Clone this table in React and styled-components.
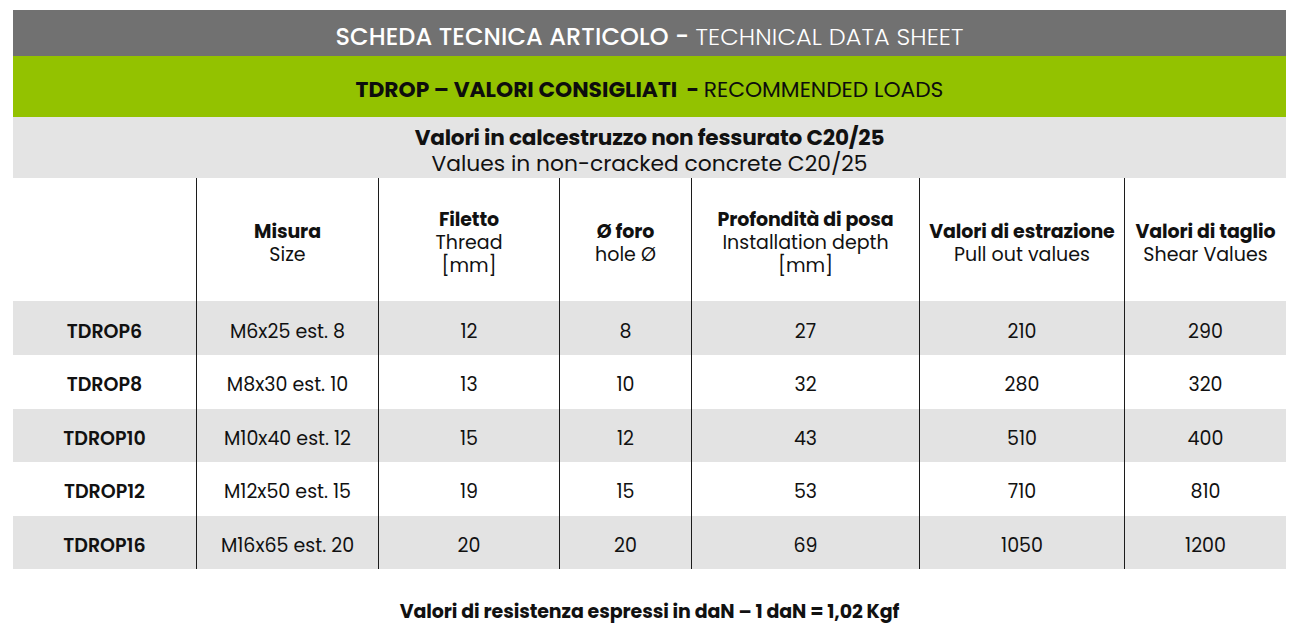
import React from "react";
import styled, { createGlobalStyle } from "styled-components";

const Global = createGlobalStyle`
  html, body { margin: 0; padding: 0; background: #ffffff; }
  body { font-family: Poppins, "Open Sans", "Noto Sans", sans-serif; color: #111; }
`;

const Sheet = styled.div`
  width: 1273px;
  margin: 10px 0 0 13px;
  display: flex;
  flex-direction: column;
`;

const TitleBar = styled.div`
  height: 46px;
  box-sizing: border-box;
  padding-top: 6px;
  background: #717171;
  color: #ffffff;
  display: flex;
  align-items: center;
  justify-content: center;
  font-size: 24px;
  letter-spacing: 0.1px;
`;

const GreenBar = styled.div`
  height: 61px;
  box-sizing: border-box;
  padding-top: 6px;
  background: #93c200;
  color: #0d0d0d;
  display: flex;
  align-items: center;
  justify-content: center;
  font-size: 21.8px;
`;

const Strong = styled.span`
  font-weight: ${(p) => p.$weight || 700};
  white-space: pre;
`;

const Light = styled.span`
  font-weight: ${(p) => p.$weight || 400};
  white-space: pre;
`;

const ConditionBar = styled.div`
  height: 61px;
  box-sizing: border-box;
  padding-top: 6px;
  background: #e4e4e4;
  display: flex;
  flex-direction: column;
  align-items: center;
  justify-content: center;
  line-height: 26px;
`;

const ConditionMain = styled.div`
  font-size: 21.6px;
  font-weight: 700;
  letter-spacing: -0.2px;
`;

const ConditionSub = styled.div`
  font-size: 21.8px;
  font-weight: 400;
`;

const Row = styled.div`
  display: grid;
  grid-template-columns: 183px 182px 181px 132px 228px 205px 162px;
  height: ${(p) => p.$height}px;
  background: ${(p) => (p.$shaded ? "#e3e3e3" : "#ffffff")};
`;

const Cell = styled.div`
  display: flex;
  flex-direction: column;
  align-items: center;
  justify-content: center;
  text-align: center;
  box-sizing: border-box;
  padding-top: 6px;
  border-left: ${(p) => (p.$first ? "none" : "1px solid #1c1c1c")};
  font-size: 19px;
  line-height: 23px;
  font-weight: ${(p) => (p.$bold ? 600 : 400)};
  color: #111;
`;

const HeadMain = styled.div`
  font-weight: 700;
  letter-spacing: -0.1px;
`;

const HeadSub = styled.div`
  font-weight: 400;
`;

const Footer = styled.div`
  margin-top: 28px;
  text-align: center;
  font-size: 19px;
  font-weight: 700;
  letter-spacing: -0.1px;
`;

const headers = [
  null,
  ["Misura", "Size"],
  ["Filetto", "Thread", "[mm]"],
  ["Ø foro", "hole Ø"],
  ["Profondità di posa", "Installation depth", "[mm]"],
  ["Valori di estrazione", "Pull out values"],
  ["Valori di taglio", "Shear Values"],
];

const data = [
  ["TDROP6", "M6x25 est. 8", "12", "8", "27", "210", "290"],
  ["TDROP8", "M8x30 est. 10", "13", "10", "32", "280", "320"],
  ["TDROP10", "M10x40 est. 12", "15", "12", "43", "510", "400"],
  ["TDROP12", "M12x50 est. 15", "19", "15", "53", "710", "810"],
  ["TDROP16", "M16x65 est. 20", "20", "20", "69", "1050", "1200"],
];

export default function App() {
  return (
    <>
      <Global />
      <Sheet>
        <TitleBar>
          <Strong $weight={500}>SCHEDA TECNICA ARTICOLO - </Strong>
          <Light $weight={300}>TECHNICAL DATA SHEET</Light>
        </TitleBar>
        <GreenBar>
          <Strong>TDROP – VALORI CONSIGLIATI  - </Strong>
          <Light>RECOMMENDED LOADS</Light>
        </GreenBar>
        <ConditionBar>
          <ConditionMain>Valori in calcestruzzo non fessurato C20/25</ConditionMain>
          <ConditionSub>Values in non-cracked concrete C20/25</ConditionSub>
        </ConditionBar>
        <Row $height={123}>
          {headers.map((h, i) => (
            <Cell key={i} $first={i === 0}>
              {h && (
                <>
                  <HeadMain>{h[0]}</HeadMain>
                  {h.slice(1).map((s) => (
                    <HeadSub key={s}>{s}</HeadSub>
                  ))}
                </>
              )}
            </Cell>
          ))}
        </Row>
        {data.map((r, ri) => (
          <Row key={r[0]} $height={ri === 0 ? 54 : 53.6} $shaded={ri % 2 === 0}>
            {r.map((v, ci) => (
              <Cell key={ci} $first={ci === 0} $bold={ci === 0}>
                {v}
              </Cell>
            ))}
          </Row>
        ))}
        <Footer>Valori di resistenza espressi in daN – 1 daN = 1,02 Kgf</Footer>
      </Sheet>
    </>
  );
}
